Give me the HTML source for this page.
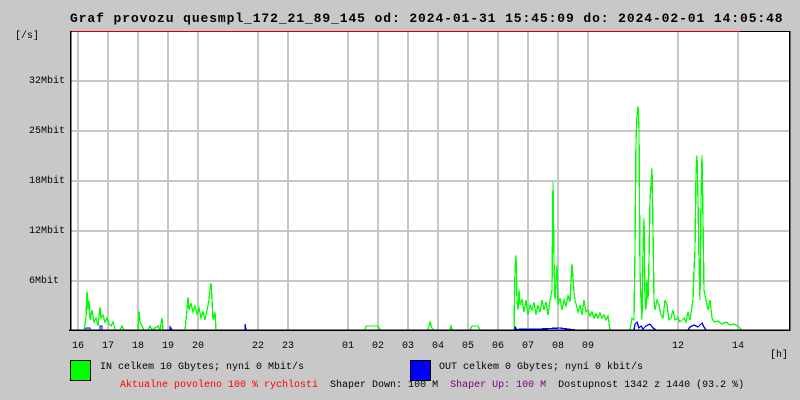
<!DOCTYPE html>
<html><head><style>
body{margin:0;width:800px;height:400px;background:#c8c8c8;position:relative;overflow:hidden;font-family:"Liberation Mono","DejaVu Sans Mono",monospace;}
.t{position:absolute;font-size:10px;line-height:12px;white-space:pre;color:#000}
</style></head><body>
<div class="t" style="left:70px;top:11px;font-size:13px;font-weight:bold;line-height:16px;letter-spacing:0.9px">Graf provozu quesmpl_172_21_89_145 od: 2024-01-31 15:45:09 do: 2024-02-01 14:05:48</div>
<div class="t" style="left:15px;top:31px">[/s]</div>
<div class="t" style="left:29px;top:76px">32Mbit</div>
<div class="t" style="left:29px;top:126px">25Mbit</div>
<div class="t" style="left:29px;top:176px">18Mbit</div>
<div class="t" style="left:29px;top:226px">12Mbit</div>
<div class="t" style="left:29px;top:276px">6Mbit</div>
<svg style="position:absolute;left:0;top:0" width="800" height="400" shape-rendering="crispEdges">
<rect x="70" y="31" width="720" height="299" fill="#fff"/>
<g stroke="#c8c8c8" stroke-width="2">
<path d="M78 31V330M108 31V330M138 31V330M168 31V330M198 31V330M258 31V330M288 31V330M348 31V330M378 31V330M408 31V330M438 31V330M468 31V330M498 31V330M528 31V330M558 31V330M588 31V330M678 31V330M738 31V330"/>
<path d="M70 81H790M70 131H790M70 181H790M70 231H790M70 281H790"/>
</g>
<g fill="none" stroke="#00ff00" stroke-width="1.3">
<polyline points="84,330 86,318 87,291 88,310 89,300 90,320 92,310 94,322 96,318 98,326 100,307 101,318 103,315 105,322 107,318 109,324 111,326 113,322 115,330 120,330 122,326 124,330 138,330 139,311 140,322 142,326 144,330 148,330 150,326 152,330 155,328 158,326 160,330 162,318 163,330 185,330 187,310 188,297 189,310 191,303 193,312 195,306 197,314 199,308 201,318 203,312 205,320 207,310 209,300 210,290 211,283 212,300 213,320 215,312 216,330 245,330 280,330 365,330 366,326 378,326 380,330 428,330 430,322 432,328 434,330 450,330 451,325 452,330 470,330 472,326 478,326 480,330 514,330 515,270 516,255 517,300 518,310 519,290 520,305 522,300 524,312 526,300 528,315 530,305 532,310 534,302 536,315 538,305 540,312 542,300 544,310 546,302 548,315 550,300 552,290 553,182 554,260 555,300 557,265 558,305 560,298 562,310 564,300 566,306 568,296 570,302 572,264 574,292 575,300 578,312 580,305 582,315 584,300 586,312 588,310 590,316 592,312 594,318 596,314 598,318 600,313 602,318 604,315 606,320 608,316 610,330 630,330 632,318 634,320 635,250 636,140 637,115 638,106 639,130 640,270 641,300 642,320 643,250 644,218 645,300 646,310 647,280 648,300 649,260 650,200 651,185 652,168 653,230 654,300 655,310 657,300 659,305 661,315 663,318 665,300 667,305 669,320 671,318 673,310 675,320 678,318 680,322 684,318 686,322 688,312 690,320 693,300 694,270 695,250 696,175 697,155 698,200 699,260 700,300 701,200 702,155 703,220 704,290 705,295 706,300 708,310 710,300 712,318 714,322 718,321 722,324 726,322 730,325 734,324 738,326 740,328 742,330"/>
</g>
<g fill="none" stroke="#0000ff" stroke-width="1.3">
<polyline points="86,330 86,328 90,328 90,330 100,330 100,326 102,326 102,330 170,330 170,327 172,330 245,330 245,324 246,330 515,330 515,327 517,330 520,329 540,329 560,328 575,330 634,330 635,324 637,322 639,328 641,326 643,329 646,326 650,324 653,328 656,330 688,330 690,327 694,325 698,327 702,323 704,327 706,330"/>
</g>
<path d="M70 31.5H740" stroke="#d00000" stroke-width="1"/>
<path d="M740 31.5H790" stroke="#000" stroke-width="1"/>
<path d="M70.5 31V331M69 330H790M789.5 31V331" stroke="#000" stroke-width="1.5" fill="none"/>
<rect x="70.5" y="360.5" width="20" height="20" fill="#00ff00" stroke="#000"/>
<rect x="410.5" y="360.5" width="20" height="20" fill="#0000ff" stroke="#000"/>
</svg>
<div class="t" style="left:72px;top:341px">16</div>
<div class="t" style="left:102px;top:341px">17</div>
<div class="t" style="left:132px;top:341px">18</div>
<div class="t" style="left:162px;top:341px">19</div>
<div class="t" style="left:192px;top:341px">20</div>
<div class="t" style="left:252px;top:341px">22</div>
<div class="t" style="left:282px;top:341px">23</div>
<div class="t" style="left:342px;top:341px">01</div>
<div class="t" style="left:372px;top:341px">02</div>
<div class="t" style="left:402px;top:341px">03</div>
<div class="t" style="left:432px;top:341px">04</div>
<div class="t" style="left:462px;top:341px">05</div>
<div class="t" style="left:492px;top:341px">06</div>
<div class="t" style="left:522px;top:341px">07</div>
<div class="t" style="left:552px;top:341px">08</div>
<div class="t" style="left:582px;top:341px">09</div>
<div class="t" style="left:672px;top:341px">12</div>
<div class="t" style="left:732px;top:341px">14</div>
<div class="t" style="left:770px;top:350px">[h]</div>
<div class="t" style="left:100px;top:362px">IN celkem 10 Gbytes; nyní 0 Mbit/s</div>
<div class="t" style="left:439px;top:362px">OUT celkem 0 Gbytes; nyní 0 kbit/s</div>
<div class="t" style="left:120px;top:380px"><span style="color:#ff0000">Aktualne povoleno 100 % rychlosti</span>  Shaper Down: 100 M  <span style="color:#800080">Shaper Up: 100 M</span>  Dostupnost 1342 z 1440 (93.2 %)</div>
</body></html>
